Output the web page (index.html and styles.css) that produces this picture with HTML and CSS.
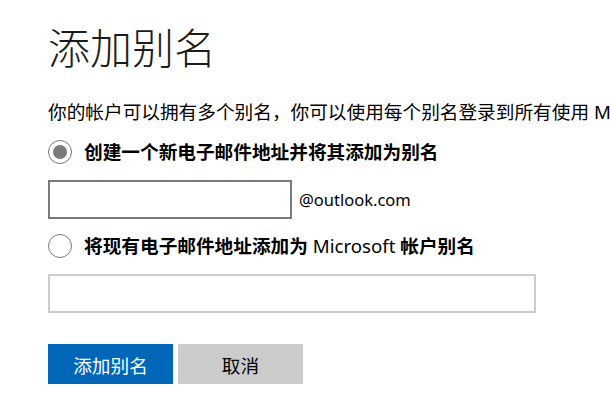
FILE: index.html
```html
<!DOCTYPE html>
<html lang="zh-CN">
<head>
    <meta charset="UTF-8">
    <meta name="viewport" content="width=device-width, initial-scale=1.0">
    <title>添加别名</title>
    <link rel="stylesheet" href="styles.css">
</head>
<body>
    <div class="page">
        <h1 class="title">添加别名</h1>
        <p class="intro">你的帐户可以拥有多个别名，你可以使用每个别名登录到所有使用 Microsoft 帐户的服务。</p>

        <label class="option">
            <span class="radio checked"></span>
            <span class="option-text">创建一个新电子邮件地址并将其添加为别名</span>
        </label>
        <div class="field-row">
            <input type="text" class="field field-short">
            <span class="domain">@outlook.com</span>
        </div>

        <label class="option">
            <span class="radio"></span>
            <span class="option-text">将现有电子邮件地址添加为 <span class="latin">Microsoft</span> 帐户别名</span>
        </label>
        <div class="field-row">
            <input type="text" class="field field-long field-disabled">
        </div>

        <div class="actions">
            <button type="button" class="btn btn-primary">添加别名</button>
            <button type="button" class="btn btn-secondary">取消</button>
        </div>
    </div>
</body>
</html>
```

FILE: styles.css
```css
* { margin: 0; padding: 0; box-sizing: border-box; }
html, body { overflow: hidden; }
body {
    font-family: "Segoe UI", "Noto Sans", "Noto Sans CJK SC", sans-serif;
    background: #fff;
    color: #000;
}
.page {
    display: flex;
    flex-direction: column;
    align-items: flex-start;
    padding: 25px 0 0 48px;
}
.title {
    font-family: "Noto Sans CJK SC", sans-serif;
    font-weight: 300;
    font-size: 42px;
    line-height: 42px;
    color: #1b1b1b;
}
.intro {
    margin-top: 33px;
    font-size: 18.67px;
    line-height: 24px;
    white-space: nowrap;
}
.option {
    display: flex;
    align-items: center;
    gap: 12px;
    height: 24px;
    margin-top: 16px;
    cursor: pointer;
}
.option-text {
    font-size: 18.67px;
    font-weight: bold;
    line-height: 24px;
    white-space: nowrap;
}
.option-text .latin { font-weight: normal; }
.radio {
    width: 24px;
    height: 24px;
    border: 1.5px solid #7a7a7a;
    border-radius: 50%;
    display: flex;
    align-items: center;
    justify-content: center;
}
.radio.checked::after {
    content: "";
    width: 14px;
    height: 14px;
    border-radius: 50%;
    background: #7a7a7a;
}
.field-row {
    display: flex;
    align-items: center;
    gap: 7px;
    margin-top: 16px;
}
.field-row + .option { margin-top: 15px; }
.field {
    height: 39px;
    border: 2px solid #7a7a7a;
    background: #fff;
    font-size: 16px;
    padding: 0 8px;
    outline: none;
}
.field-short { width: 244px; }
.field-long { width: 488px; }
.field-disabled { border-color: #cccccc; }
.domain {
    font-size: 16.5px;
    line-height: 24px;
}
.actions {
    display: flex;
    gap: 5px;
    margin-top: 31px;
}
.btn {
    width: 125px;
    height: 40px;
    border: none;
    font-family: inherit;
    font-size: 18.67px;
    cursor: pointer;
}
.btn-primary { background: #0067b8; color: #fff; }
.btn-secondary { background: #cccccc; color: #000; }
```
